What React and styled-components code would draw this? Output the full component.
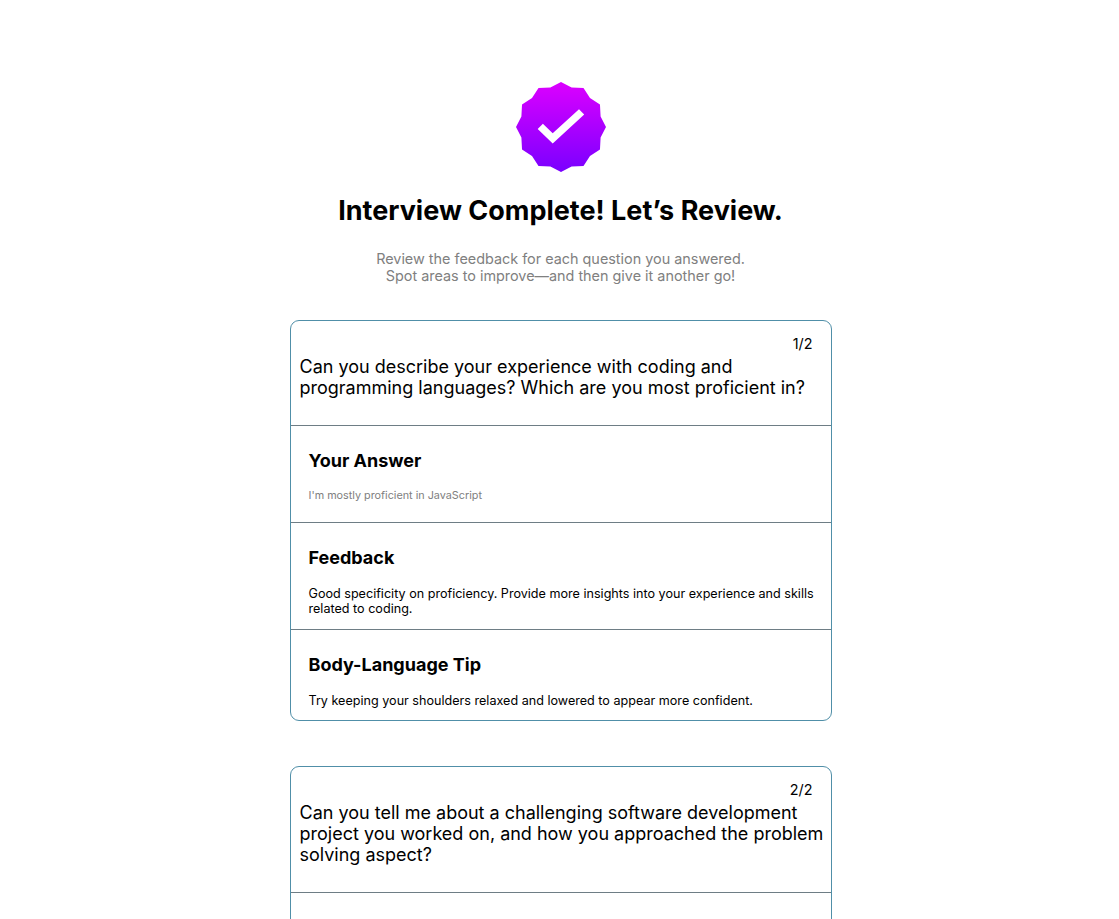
import React from "react";
import styled, { createGlobalStyle } from "styled-components";

const Global = createGlobalStyle`
  *{box-sizing:border-box}
  body{margin:0;background:#fff;font-family:Inter,sans-serif;color:#000;overflow:hidden}
  #root{height:919px;overflow:hidden}
  h1,h2,p{margin:0}
`;
const Page = styled.main`
  display:flex;flex-direction:column;align-items:center;padding:82px 0 0 2px;
`;
const Badge = styled.svg`
  display:block;width:90px;height:90px;
`;
const Title = styled.h1`
  margin-top:22px;font-size:27px;line-height:34px;font-weight:700;white-space:nowrap;
`;
const Intro = styled.p`
  margin-top:22px;font-size:14.4px;line-height:17px;color:#808080;text-align:center;
`;
const Card = styled.article`
  width:542px;border:1px solid #508fa8;border-radius:9px;margin-top:${(p) => p.$gap}px;flex-shrink:0;
`;
const Question = styled.header`
  padding:14px 0 27px 9px;
`;
const Counter = styled.div`
  font-size:14.4px;line-height:18px;text-align:right;padding-right:18px;
`;
const Prompt = styled.p`
  font-size:18px;line-height:21px;margin-top:3px;white-space:nowrap;
`;
const Section = styled.section`
  border-top:1px solid #6e7d85;height:${(p) => p.$height}px;padding:24px 0 0 18px;
`;
const Heading = styled.h2`
  font-size:18px;line-height:22px;font-weight:700;
`;
const Copy = styled.p`
  margin-top:${(p) => (p.$muted ? 16 : 17)}px;font-size:${(p) => (p.$muted ? 10.8 : 12.6)}px;line-height:15px;color:${(p) => (p.$muted ? "#808080" : "#000")};white-space:nowrap;
`;
const points = Array.from({ length: 24 }, (_, i) => {
  const r = i % 2 ? 41 : 45;
  const a = (i * Math.PI) / 12;
  return `${45 + r * Math.sin(a)},${45 - r * Math.cos(a)}`;
}).join(" ");

export default function App() {
  return (
    <>
      <Global />
      <Page>
        <Badge viewBox="0 0 90 90">
          <defs>
            <linearGradient id="violet" x1="0" y1="0" x2="0" y2="1">
              <stop stopColor="#dc00ff" />
              <stop offset="1" stopColor="#7a00ff" />
            </linearGradient>
          </defs>
          <polygon points={points} fill="url(#violet)" />
          <path d="M21.7 47 26.9 41.8 36.7 51.2 63 27.3 68.2 32.5 36.7 61.4Z" fill="#fff" />
        </Badge>
        <Title>Interview Complete! Let’s Review.</Title>
        <Intro>Review the feedback for each question you answered.<br />Spot areas to improve—and then give it another go!</Intro>
        <Card $gap={36}>
          <Question>
            <Counter>1/2</Counter>
            <Prompt>Can you describe your experience with coding and<br />programming languages? Which are you most proficient in?</Prompt>
          </Question>
          <Section $height={97}>
            <Heading>Your Answer</Heading>
            <Copy $muted>I'm mostly proficient in JavaScript</Copy>
          </Section>
          <Section $height={107}>
            <Heading>Feedback</Heading>
            <Copy>Good specificity on proficiency. Provide more insights into your experience and skills<br />related to coding.</Copy>
          </Section>
          <Section $height={91}>
            <Heading>Body-Language Tip</Heading>
            <Copy>Try keeping your shoulders relaxed and lowered to appear more confident.</Copy>
          </Section>
        </Card>
        <Card $gap={45}>
          <Question>
            <Counter>2/2</Counter>
            <Prompt>Can you tell me about a challenging software development<br />project you worked on, and how you approached the problem<br />solving aspect?</Prompt>
          </Question>
          <Section $height={97} />
        </Card>
      </Page>
    </>
  );
}
